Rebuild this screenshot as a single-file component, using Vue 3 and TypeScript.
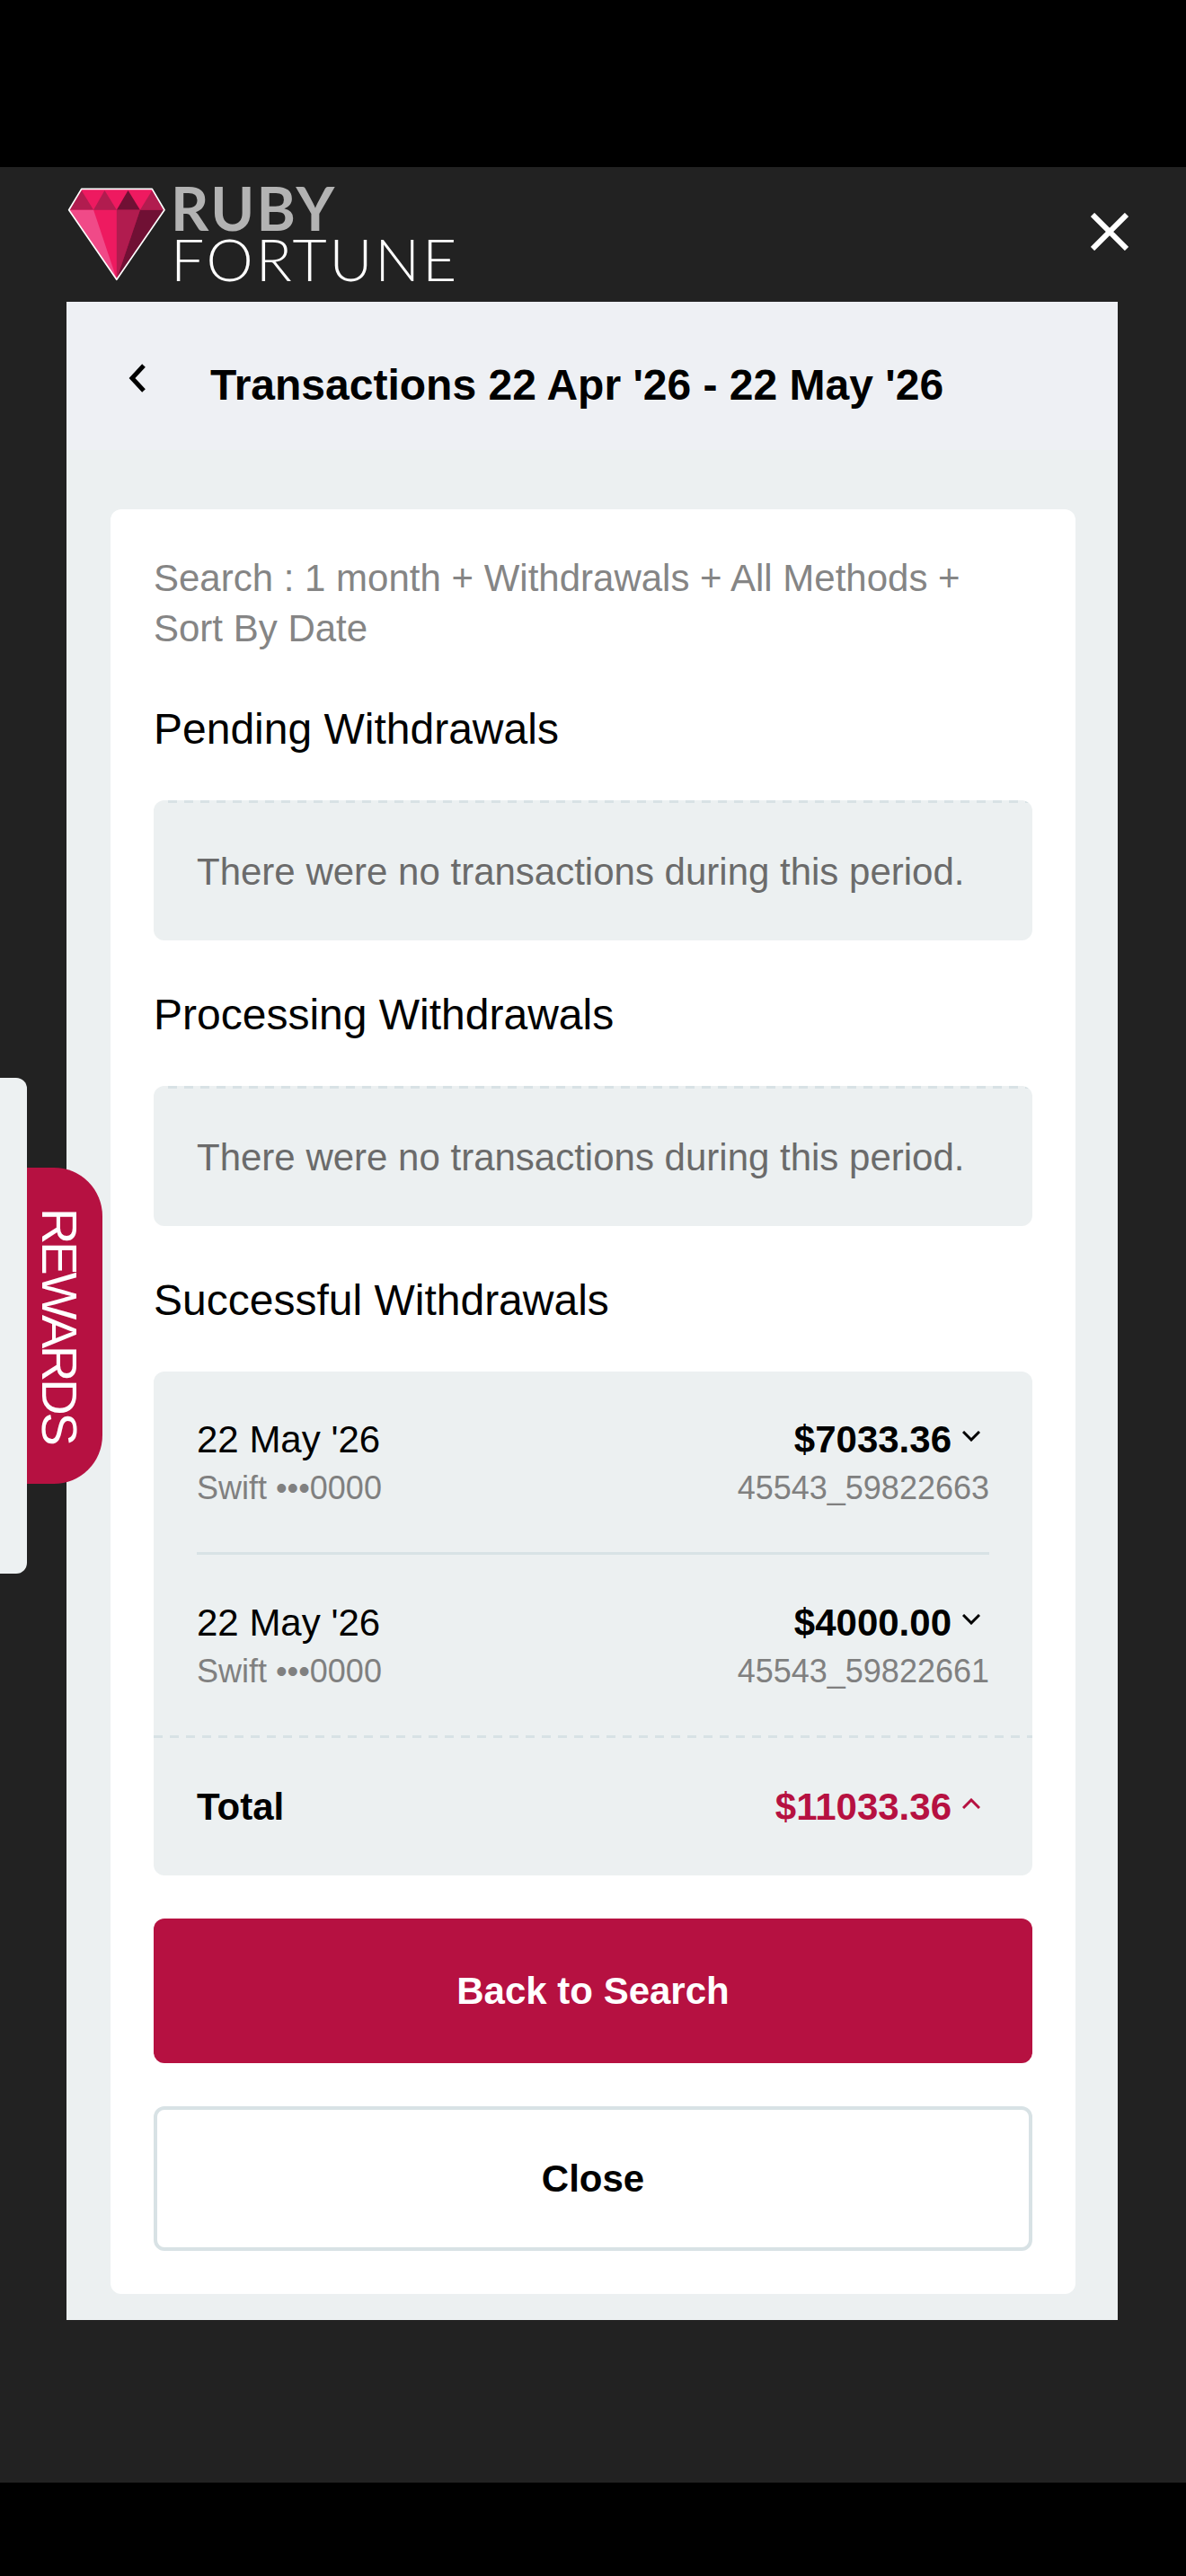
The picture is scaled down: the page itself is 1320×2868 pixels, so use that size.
<script setup lang="ts">
interface Tx {
  date: string;
  method: string;
  amount: string;
  ref: string;
}

const emptyText = "There were no transactions during this period.";
const emptySections = ["Pending Withdrawals", "Processing Withdrawals"];

const transactions: Tx[] = [
  { date: "22 May '26", method: "Swift •••0000", amount: "$7033.36", ref: "45543_59822663" },
  { date: "22 May '26", method: "Swift •••0000", amount: "$4000.00", ref: "45543_59822661" },
];
</script>

<template>
  <div class="page">
    <div class="black-bar top" />

    <div class="stage">
      <header class="brand">
        <div class="logo">
          <svg class="gem" viewBox="40 50 335 320" width="112" height="107">
            <path d="M50 130 90 62H325L362 130 207 360Z" fill="#ee1a60" />
            <path d="M50 130 90 65 130 130Z" fill="#b11c4f" />
            <path d="M130 130 167 65 207 130Z" fill="#b11c4f" />
            <path d="M207 130 245 65 285 130Z" fill="#701034" />
            <path d="M285 130 325 65 362 130Z" fill="#b11c4f" />
            <path d="M50 130H130L207 360Z" fill="#f04a88" />
            <path d="M207 130H285L207 360Z" fill="#b11c4f" />
            <path d="M285 130H362L207 360Z" fill="#701034" />
            <path d="M48 130 90 60H325L366 130 207 362Z" fill="none" stroke="#fff" stroke-width="5" stroke-linejoin="round" />
          </svg>
          <div class="wordmark">
            <span class="ruby">RUBY</span>
            <span class="fortune">FORTUNE</span>
          </div>
        </div>
        <svg class="close-x" viewBox="0 0 42 42" width="42" height="42">
          <path d="M2 2 40 40M40 2 2 40" stroke="#fff" stroke-width="6" fill="none" />
        </svg>
      </header>

      <main class="panel">
        <div class="panel-head">
          <svg class="back" viewBox="0 0 20 32" width="20" height="32">
            <path d="M17 2 4 16 17 30" stroke="#000" stroke-width="5" fill="none" />
          </svg>
          <h1>Transactions 22 Apr '26 - 22 May '26</h1>
        </div>

        <div class="card">
          <p class="search">Search : 1 month + Withdrawals + All Methods + Sort By Date</p>

          <template v-for="title in emptySections" :key="title">
            <h2>{{ title }}</h2>
            <div class="empty">{{ emptyText }}</div>
          </template>

          <h2>Successful Withdrawals</h2>
          <div class="list">
            <div v-for="tx in transactions" :key="tx.ref" class="row">
              <div class="row-col">
                <span class="date">{{ tx.date }}</span>
                <span class="sub">{{ tx.method }}</span>
              </div>
              <div class="row-col right">
                <span class="amount">
                  {{ tx.amount }}
                  <svg class="chev" viewBox="0 0 20 12" width="20" height="12">
                    <path d="M1 1 10 10 19 1" stroke="#000" stroke-width="3" fill="none" />
                  </svg>
                </span>
                <span class="sub">{{ tx.ref }}</span>
              </div>
            </div>
            <div class="total">
              <span class="total-label">Total</span>
              <span class="amount red">
                $11033.36
                <svg class="chev" viewBox="0 0 20 12" width="20" height="12">
                  <path d="M1 11 10 2 19 11" stroke="#b61141" stroke-width="3" fill="none" />
                </svg>
              </span>
            </div>
          </div>

          <button class="btn primary">Back to Search</button>
          <button class="btn ghost">Close</button>
        </div>
      </main>

      <aside class="side-sliver" />
      <div class="rewards"><span>REWARDS</span></div>
    </div>

    <div class="black-bar bottom" />
  </div>
</template>

<style scoped>
.page {
  width: 1320px;
  height: 2868px;
  display: flex;
  flex-direction: column;
  font-family: "Liberation Sans", Arial, sans-serif;
  background: #000;
  color: #000;
}

.black-bar.top {
  height: 186px;
}

.black-bar.bottom {
  height: 104px;
}

.stage {
  position: relative;
  flex: 1;
  background: #222;
  padding: 0 76px 0 74px;
}

.brand {
  height: 150px;
  display: flex;
  align-items: center;
  justify-content: space-between;
}

.logo {
  display: flex;
  align-items: flex-start;
  gap: 4px;
  margin-top: -3px;
}

.gem {
  display: block;
  margin-top: 3px;
}

.wordmark {
  display: flex;
  flex-direction: column;
  font-family: Lato, sans-serif;
  line-height: 56px;
}

.ruby {
  font-size: 66px;
  font-weight: 700;
  letter-spacing: 2.2px;
  color: #b3b3b3;
}

.fortune {
  font-size: 66px;
  font-weight: 300;
  letter-spacing: 2.8px;
  color: #fff;
}

.close-x {
  margin-right: -12px;
  margin-top: -6px;
}

.panel {
  background: #ecf0f1;
  height: 2247px;
}

.panel-head {
  box-sizing: border-box;
  background: #eef0f4;
  height: 165px;
  padding: 18px 0 0 69px;
  display: flex;
  align-items: center;
  gap: 71px;
  margin-bottom: 66px;
}

.back {
  margin-top: -14px;
}

h1 {
  margin: 0;
  font-size: 48px;
  line-height: 56px;
  font-weight: 700;
  padding-top: 3px;
}

.card {
  margin: 0 47px 0 49px;
  padding: 49px 48px 48px;
  background: #fff;
  border-radius: 12px;
  display: flex;
  flex-direction: column;
}

.search {
  margin: 0;
  font-size: 42px;
  line-height: 56px;
  color: #858585;
}

h2 {
  margin: 56px 0 51px;
  font-size: 48px;
  line-height: 56px;
  font-weight: 400;
}

.empty {
  height: 156px;
  box-sizing: border-box;
  border-radius: 12px;
  background: #ecf0f1 repeating-linear-gradient(90deg, #d8e2e5 0 10px, transparent 10px 18px) 16px 0 / calc(100% - 16px) 3px no-repeat;
  padding: 3px 0 0 48px;
  display: flex;
  align-items: center;
  font-size: 42px;
  color: #6b6b6b;
}

.empty + h2 {
  margin-top: 55px;
}

.list {
  background: #ecf0f1;
  border-radius: 12px;
  height: 561px;
  display: flex;
  flex-direction: column;
  margin-bottom: 48px;
}

.row {
  height: 204px;
  box-sizing: border-box;
  margin: 0 48px;
  padding-top: 49px;
  display: flex;
  justify-content: space-between;
  border-bottom: 3px solid #d8e2e5;
}

.row:nth-child(2) {
  margin: 0;
  padding-left: 48px;
  padding-right: 48px;
  border-bottom: none;
  background: repeating-linear-gradient(90deg, #d8e2e5 0 10px, transparent 10px 18px) 0 100% / 100% 3px no-repeat;
}

.row-col {
  display: flex;
  flex-direction: column;
}

.row-col.right {
  align-items: flex-end;
}

.date {
  font-size: 42px;
  line-height: 54px;
}

.sub {
  font-size: 36px;
  line-height: 54px;
  color: #808080;
}

.amount {
  font-size: 42px;
  line-height: 54px;
  font-weight: 700;
  display: flex;
  align-items: center;
  gap: 12px;
  padding-right: 10px;
}

.amount.red {
  color: #b61141;
}

.chev {
  margin-top: -8px;
}

.total {
  flex: 1;
  display: flex;
  align-items: center;
  justify-content: space-between;
  padding: 0 48px;
}

.total-label {
  font-size: 42px;
  font-weight: 700;
}

.btn {
  display: block;
  width: 100%;
  height: 161px;
  box-sizing: border-box;
  border-radius: 12px;
  font-family: inherit;
  font-size: 42px;
  font-weight: 700;
  cursor: pointer;
}

.btn.primary {
  background: #b61141;
  color: #fff;
  border: none;
  margin-bottom: 48px;
}

.btn.ghost {
  background: #fff;
  color: #000;
  border: 4px solid #d8e2e5;
}

.side-sliver {
  position: absolute;
  left: 0;
  top: 1014px;
  width: 30px;
  height: 552px;
  background: #edf1f2;
  border-radius: 0 12px 12px 0;
}

.rewards {
  position: absolute;
  left: 30px;
  top: 1114px;
  width: 84px;
  height: 352px;
  background: #b61141;
  border-radius: 0 54px 54px 0;
  display: flex;
  align-items: center;
  justify-content: center;
  color: #fff;
  font-size: 56px;
}

.rewards span {
  writing-mode: vertical-rl;
  line-height: 1;
  letter-spacing: -3.2px;
  margin-right: 12px;
}
</style>
